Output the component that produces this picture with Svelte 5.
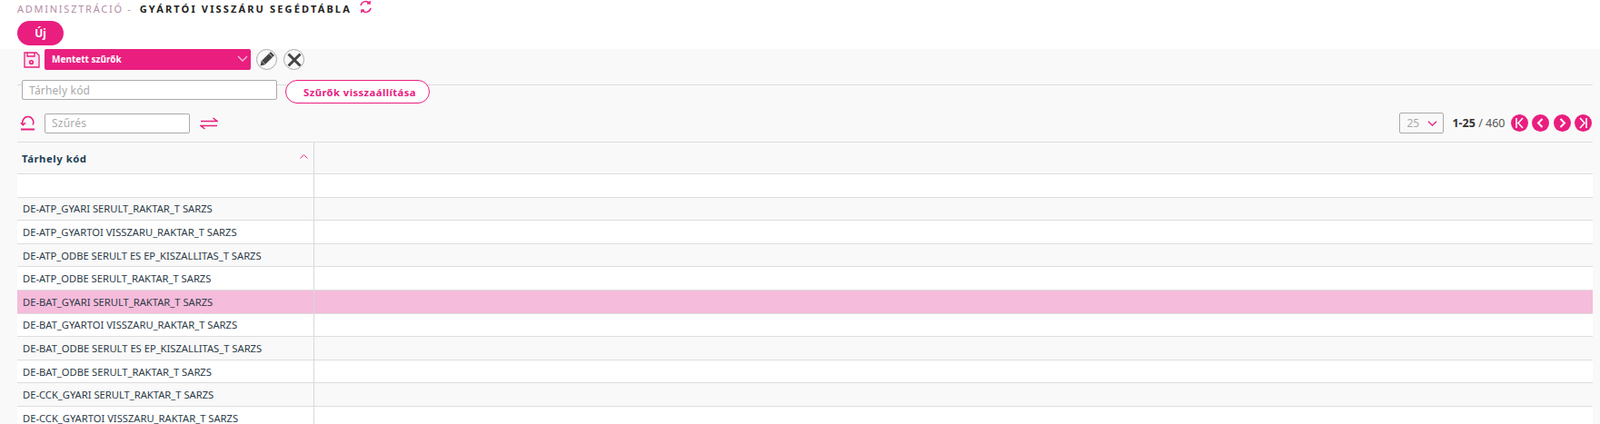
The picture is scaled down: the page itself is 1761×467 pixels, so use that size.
<script>
	const rows = [
		'',
		'DE-ATP_GYARI SERULT_RAKTAR_T SARZS',
		'DE-ATP_GYARTOI VISSZARU_RAKTAR_T SARZS',
		'DE-ATP_ODBE SERULT ES EP_KISZALLITAS_T SARZS',
		'DE-ATP_ODBE SERULT_RAKTAR_T SARZS',
		'DE-BAT_GYARI SERULT_RAKTAR_T SARZS',
		'DE-BAT_GYARTOI VISSZARU_RAKTAR_T SARZS',
		'DE-BAT_ODBE SERULT ES EP_KISZALLITAS_T SARZS',
		'DE-BAT_ODBE SERULT_RAKTAR_T SARZS',
		'DE-CCK_GYARI SERULT_RAKTAR_T SARZS',
		'DE-CCK_GYARTOI VISSZARU_RAKTAR_T SARZS'
	];
	const selected = 5;
</script>

<div class="page">
	<header class="top">
		<div class="crumb">
			<span class="parent">ADMINISZTRÁCIÓ -</span>
			<span class="title">GYÁRTÓI VISSZÁRU SEGÉDTÁBLA</span>
			<svg class="refresh" width="15" height="15" viewBox="0 0 15 15" fill="none" stroke="#e91e7f" stroke-width="1.5">
				<path d="M2 6.2A5.6 5.6 0 0 1 11.6 3.4" />
				<path d="M13 8.8A5.6 5.6 0 0 1 3.4 11.6" />
				<path d="M9 3.8l3 .2.2-3" />
				<path d="M6 11.2l-3-.2-.2 3" />
			</svg>
		</div>
		<button class="new">Új</button>
	</header>

	<section class="body">
		<div class="saved">
			<svg class="disk" width="18" height="18" viewBox="0 0 18 18" fill="none" stroke="#e91e7f" stroke-width="1.3">
				<path d="M1 1h13l3 3v13H1z" fill="#fde8f2" />
				<path d="M4 1v4h8V1" />
				<circle cx="8.5" cy="11.5" r="1.8" stroke-width="1.6" />
			</svg>
			<div class="saved-select">
				<span>Mentett szűrők</span>
				<svg width="12" height="7" viewBox="0 0 12 7" fill="none" stroke="#f6bfd9" stroke-width="1.3"><path d="M1 1l5 5 5-5" /></svg>
			</div>
			<span class="round">
				<svg width="21" height="21" viewBox="0 0 21 21" fill="#444">
					<path d="M3.5 17.5l1.2-5.2L15 2l4 4L8.7 16.3z" />
					<path d="M13.4 4.2l3.4 3.4" stroke="#f9f9f9" stroke-width="0.8" />
					<path d="M5.2 12.2l3.6 3.6" stroke="#f9f9f9" stroke-width="0.6" />
				</svg>
			</span>
			<span class="round">
				<svg width="18" height="18" viewBox="0 0 18 18" stroke="#444" stroke-width="3"><path d="M2.5 2.5l13 13M15.5 2.5l-13 13" /></svg>
			</span>
		</div>

		<div class="filters">
			<input class="code" placeholder="Tárhely kód" />
			<button class="reset">Szűrők visszaállítása</button>
		</div>

		<div class="toolbar">
			<svg class="undo" width="17" height="18" viewBox="0 0 17 18" fill="none" stroke="#e91e7f" stroke-width="1.5">
				<path d="M3.6 10.5A6 6 0 1 1 14 10.5" />
				<path d="M0.8 8.2l2.6 2.6 2.6-2.6" />
				<path d="M1 15.5h15" stroke-width="2" />
			</svg>
			<input class="search" placeholder="Szűrés" />
			<svg class="swap" width="20" height="14" viewBox="0 0 20 14" fill="none" stroke="#e91e7f" stroke-width="1.5">
				<path d="M1 4.5h18L14.5 1" />
				<path d="M19 9.5H1L5.5 13" />
			</svg>
			<div class="pager">
				<div class="size">
					<span>25</span>
					<svg width="11" height="6" viewBox="0 0 11 6" fill="none" stroke="#e91e7f" stroke-width="1.3"><path d="M1 .8l4.5 4.4L10 .8" /></svg>
				</div>
				<span class="count"><b>1-25</b> / 460</span>
				<div class="pages">
					<span class="page-btn"><svg width="19" height="19" viewBox="0 0 19 19" fill="none" stroke="#fff" stroke-width="1.6"><path d="M6 4v11M13 4L8 9.5l5 5.5" /></svg></span>
					<span class="page-btn"><svg width="19" height="19" viewBox="0 0 19 19" fill="none" stroke="#fff" stroke-width="2"><path d="M11.5 5L7 9.5l4.5 4.5" /></svg></span>
					<span class="page-btn"><svg width="19" height="19" viewBox="0 0 19 19" fill="none" stroke="#fff" stroke-width="2"><path d="M7.5 5L12 9.5 7.5 14" /></svg></span>
					<span class="page-btn"><svg width="19" height="19" viewBox="0 0 19 19" fill="none" stroke="#fff" stroke-width="1.6"><path d="M13 4v11M6 4l5 5.5L6 15" /></svg></span>
				</div>
			</div>
		</div>

		<div class="table">
			<div class="row head">
				<div class="cell first">
					<span>Tárhely kód</span>
					<svg width="9" height="5" viewBox="0 0 9 5" fill="none" stroke="#e91e7f" stroke-width="0.9"><path d="M.5 4.5l4-4 4 4" /></svg>
				</div>
				<div class="cell"></div>
			</div>
			{#each rows as row, i}
				<div class="row" class:even={i % 2 === 1} class:selected={i === selected}>
					<div class="cell first">{row}</div>
					<div class="cell"></div>
				</div>
			{/each}
		</div>
	</section>
</div>

<style>
	:global(body) {
		margin: 0;
		background: #f9f9f9;
		overflow: hidden;
	}

	.page {
		height: 467px;
		overflow: hidden;
		font-family: 'Noto Sans', 'Open Sans', sans-serif;
		color: #333;
	}

	.top {
		background: #fff;
		height: 54px;
		padding: 0 0 0 19px;
		box-sizing: border-box;
	}

	.crumb {
		display: flex;
		align-items: center;
		height: 18px;
		font-size: 11px;
	}

	.parent {
		color: #b48ca6;
		letter-spacing: 1.75px;
		margin-right: 8px;
	}

	.title {
		color: #222;
		font-weight: 700;
		letter-spacing: 2.15px;
	}

	.refresh {
		margin-left: 8px;
		margin-top: -3px;
	}

	.new {
		display: block;
		width: 51px;
		height: 27px;
		margin-top: 5px;
		border: 0;
		border-radius: 14px;
		background: #e91e7f;
		color: #fff;
		font: 700 12px 'Noto Sans', sans-serif;
		padding: 0;
	}

	.body {
		padding: 0 8px 0 19px;
	}

	.saved {
		display: flex;
		align-items: center;
		height: 23px;
		padding-left: 7px;
	}

	.disk {
		margin-right: 5px;
	}

	.saved-select {
		width: 227px;
		height: 23px;
		box-sizing: border-box;
		background: #e91e7f;
		border-radius: 2px;
		color: #fff;
		font-size: 10px;
		font-weight: 700;
		display: flex;
		align-items: center;
		justify-content: space-between;
		padding: 0 3px 2px 8px;
		margin-right: 6px;
	}

	.round {
		width: 23px;
		height: 23px;
		box-sizing: border-box;
		border: 1px solid #aaa;
		border-radius: 50%;
		display: flex;
		align-items: center;
		justify-content: center;
		margin-right: 7px;
	}

	.filters {
		display: flex;
		align-items: flex-start;
		gap: 9px;
		margin-top: 11px;
		padding-left: 5px;
		background: linear-gradient(#ddd, #ddd) no-repeat 0 5px / 100% 1px;
	}

	input {
		box-sizing: border-box;
		background: #fff;
		border: 1px solid #aaa;
		border-radius: 2px;
		font: 12px 'Noto Sans', sans-serif;
		padding: 0 7px;
		outline: 0;
	}

	input::placeholder {
		color: #aaa;
		letter-spacing: 0.2px;
	}

	.code {
		width: 281px;
		height: 22px;
	}

	.reset {
		width: 159px;
		height: 26px;
		background: #fff;
		border: 1px solid #e91e7f;
		border-radius: 13px;
		color: #e91e7f;
		font: 700 11.3px 'Noto Sans', sans-serif;
		letter-spacing: 0.4px;
		padding: 0 0 0 5px;
	}

	.toolbar {
		display: flex;
		align-items: center;
		height: 23px;
		margin-top: 10px;
		padding-left: 3px;
	}

	.search {
		width: 160px;
		height: 22px;
		margin-left: 10px;
	}

	.swap {
		margin-left: 11px;
	}

	.pager {
		margin-left: auto;
		padding-right: 1px;
		display: flex;
		align-items: center;
	}

	.size {
		width: 49px;
		height: 23px;
		box-sizing: border-box;
		border: 1px solid #aaa;
		border-radius: 2px;
		background: #f9f9f9;
		color: #aaa;
		font-size: 12px;
		display: flex;
		align-items: center;
		justify-content: space-between;
		padding: 0 6px 0 7px;
	}

	.count {
		margin-left: 9px;
		font-size: 12.5px;
		color: #555;
		white-space: nowrap;
	}

	.count b {
		color: #333;
	}

	.pages {
		display: flex;
		gap: 4.5px;
		margin-left: 6px;
	}

	.page-btn {
		width: 19px;
		height: 19px;
		border-radius: 50%;
		background: #e91e7f;
		display: block;
	}

	.page-btn svg {
		display: block;
	}

	.table {
		margin-top: 9px;
		border-top: 1px solid #ddd;
	}

	.row {
		display: grid;
		grid-template-columns: 327px 1fr;
		height: 25.6px;
		box-sizing: border-box;
		border-bottom: 1px solid #ddd;
		background: #fff;
		font-size: 11.2px;
		color: #2c3a47;
	}

	.row.even {
		background: #f9f9f9;
	}

	.row.selected {
		background: #f5bcdb;
	}

	.row.head {
		height: 35px;
		background: #f9f9f9;
		font-size: 11.3px;
		font-weight: 700;
		color: #1d3f55;
		letter-spacing: 0.55px;
	}

	.cell {
		min-width: 0;
		display: flex;
		align-items: center;
	}

	.cell.first {
		padding: 0 6px 0 6px;
		border-right: 1px solid #d5d9dc;
		justify-content: space-between;
		white-space: nowrap;
	}

	.head .cell.first {
		padding-left: 5px;
	}

	.head .cell.first svg {
		margin-bottom: 4px;
	}
</style>
